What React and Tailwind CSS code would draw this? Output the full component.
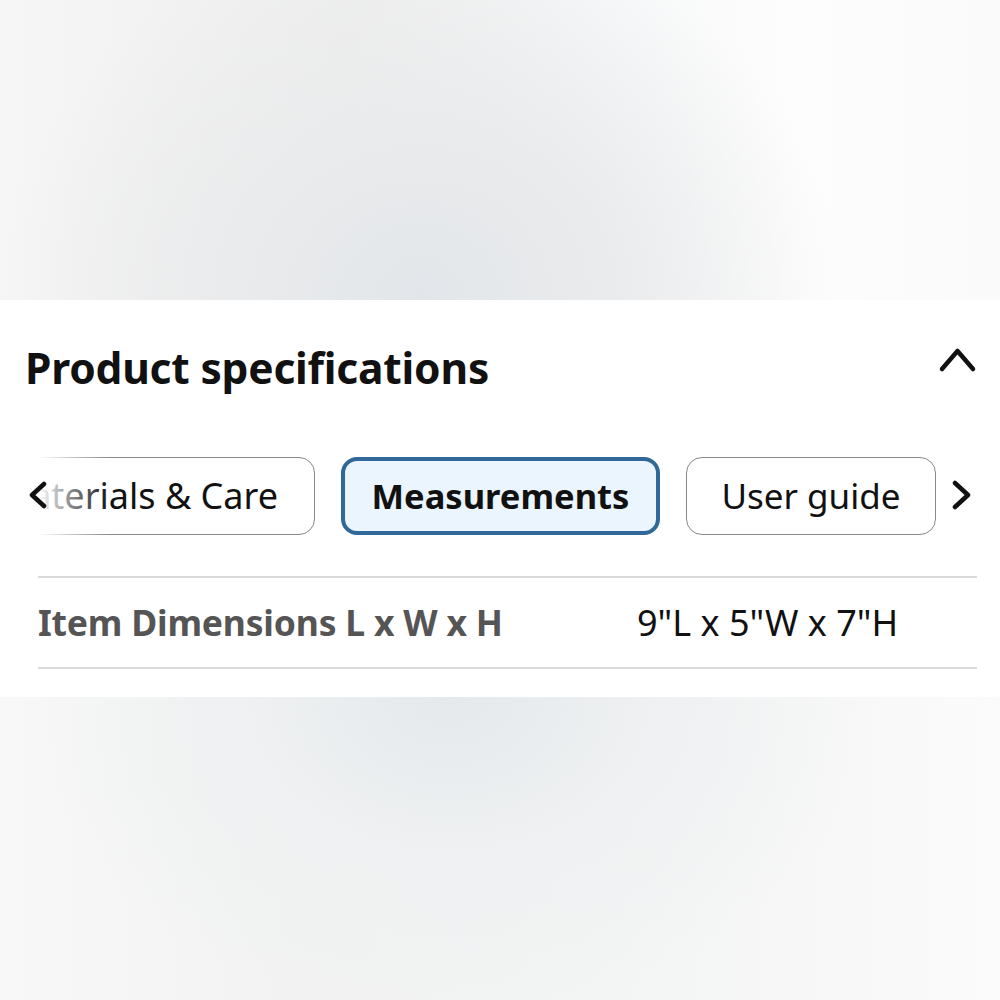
export default function App() {
  const font = { fontFamily: '"Noto Sans", "Open Sans", sans-serif' };
  return (
    <div className="w-[1000px] h-[1000px] flex flex-col overflow-hidden" style={font}>
      <div className="h-[300px] bg-[radial-gradient(ellipse_420px_380px_at_420px_300px,#e2e6ea_0%,#eaebec_45%,rgba(240,240,240,0)_100%),linear-gradient(90deg,#f6f6f6_0%,#eeeeee_35%,#f7f8f9_60%,#fdfdfd_80%,#fafafa_100%)]" />
      <div className="h-[397px] bg-white flex flex-col">
        <div className="flex items-center justify-between pl-[25px] pr-[22px] pt-[41px]">
          <h2 className="text-[42.5px] leading-[54px] font-bold text-[#111] tracking-[-0.2px]">Product specifications</h2>
          <svg width="40" height="30" viewBox="0 0 40 30" className="mt-[-16px]">
            <polyline points="4,24 19.5,6 35,24" fill="none" stroke="#111" strokeWidth="4.5" strokeLinecap="round" strokeLinejoin="round" />
          </svg>
        </div>
        <div className="relative mt-[62px] h-[78px] overflow-hidden">
          <div className="flex gap-[26px] ml-[-40px]">
            <div className="shrink-0 w-[355px] h-[78px] rounded-[16px] border-[1.5px] border-[#8a8a8a] flex items-center justify-end pr-[36px] text-[36px] text-[#111]">Materials &amp; Care</div>
            <div className="shrink-0 w-[319px] h-[78px] rounded-[16px] border-[4px] border-[#2f6899] bg-[#eaf5fd] flex items-center justify-center text-[34.5px] font-bold text-[#111]">Measurements</div>
            <div className="shrink-0 w-[250px] h-[78px] rounded-[16px] border-[1.5px] border-[#8a8a8a] flex items-center justify-center text-[35px] text-[#111]">User guide</div>
            <div className="shrink-0 w-[200px] h-[78px] rounded-[16px] border-[1.5px] border-[#8a8a8a]" />
          </div>
          <div className="absolute left-0 top-0 h-full w-[110px] bg-[linear-gradient(90deg,#fff_0%,#fff_35%,rgba(255,255,255,0.55)_62%,rgba(255,255,255,0)_100%)]" />
          <svg className="absolute left-[26px] top-[24px]" width="24" height="28" viewBox="0 0 24 28">
            <polyline points="18,3 6,14 18,25" fill="none" stroke="#111" strokeWidth="4.5" strokeLinecap="round" strokeLinejoin="round" />
          </svg>
          <div className="absolute right-0 top-0 h-full w-[60px] bg-[linear-gradient(90deg,rgba(255,255,255,0)_0%,#fff_35%,#fff_100%)]" />
          <svg className="absolute left-[950px] top-[23px]" width="24" height="30" viewBox="0 0 24 30">
            <polyline points="5,3 18,15 5,27" fill="none" stroke="#111" strokeWidth="4.5" strokeLinecap="round" strokeLinejoin="round" />
          </svg>
        </div>
        <div className="ml-[38px] mr-[23px] mt-[41px] border-t-2 border-[#dadada]" />
        <div className="ml-[38px] mr-[23px] h-[89px] flex items-center">
          <div className="w-[599px] text-[35.5px] font-bold text-[#555] tracking-[-0.2px]">Item Dimensions L x W x H</div>
          <div className="text-[36px] text-[#111]">9"L x 5"W x 7"H</div>
        </div>
        <div className="ml-[38px] mr-[23px] border-t-2 border-[#dadada]" />
      </div>
      <div className="flex-1 bg-[radial-gradient(ellipse_420px_320px_at_450px_0px,#e5e9ec_0%,#eff1f2_50%,rgba(243,243,243,0)_100%),linear-gradient(90deg,#f8f8f8_0%,#f1f2f1_30%,#f3f4f4_60%,#f8f8f8_85%,#fbfbfb_100%)]" />
    </div>
  );
}
